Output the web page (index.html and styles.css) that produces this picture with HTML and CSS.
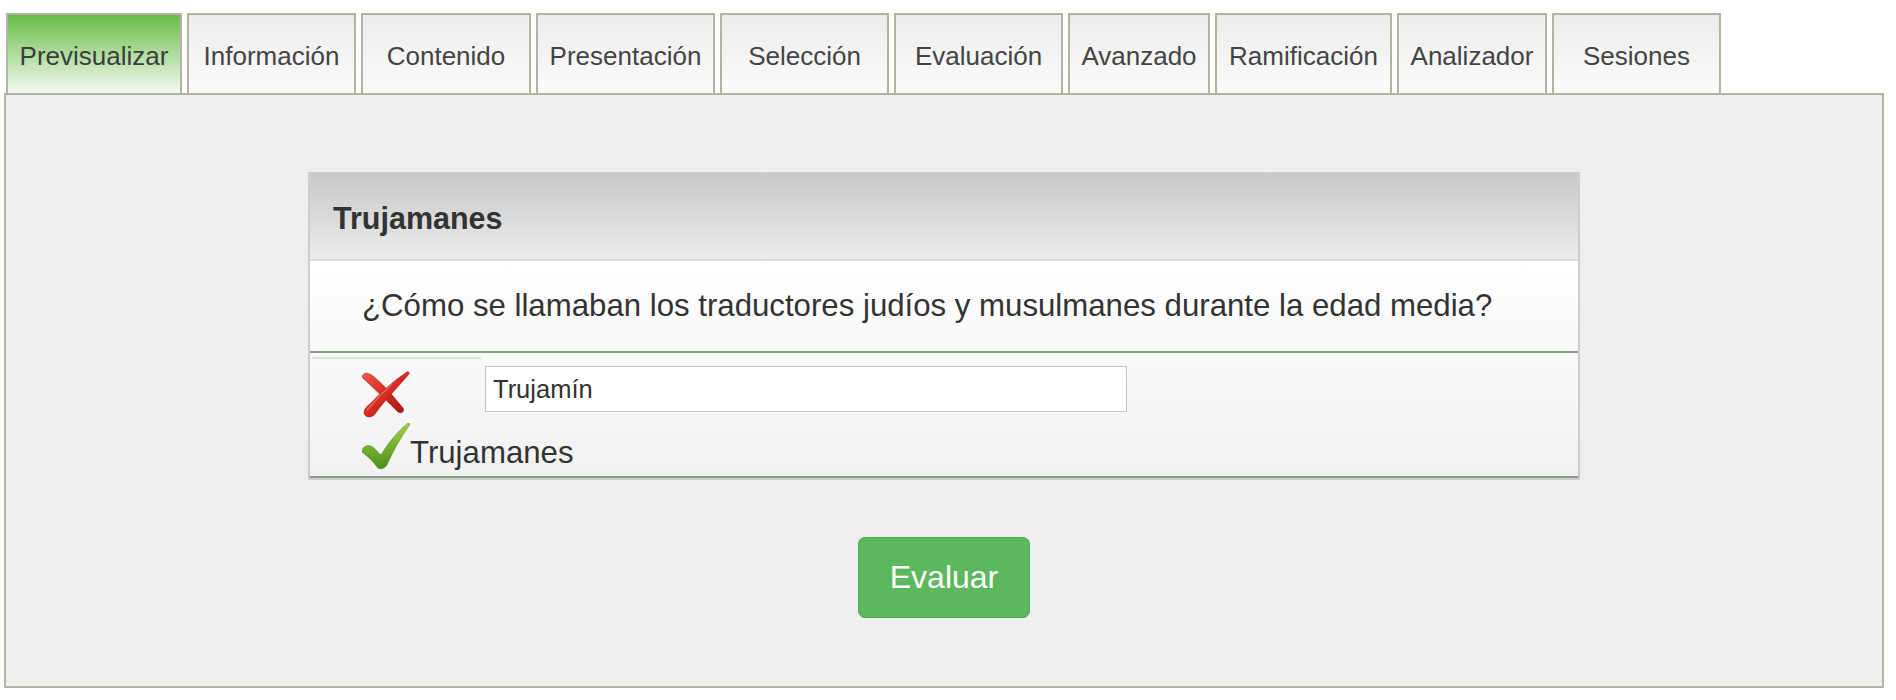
FILE: index.html
```html
<!DOCTYPE html>
<html lang="es">
<head>
<meta charset="utf-8">
<title>Previsualizar</title>
<link rel="stylesheet" href="styles.css">
</head>
<body>
<div class="page">
  <nav class="tabs">
    <div class="tab tab-active tab-prev">Previsualizar</div>
    <div class="tab tab-info">Información</div>
    <div class="tab tab-cont">Contenido</div>
    <div class="tab tab-pres">Presentación</div>
    <div class="tab tab-sel">Selección</div>
    <div class="tab tab-eval">Evaluación</div>
    <div class="tab tab-avz">Avanzado</div>
    <div class="tab tab-ram">Ramificación</div>
    <div class="tab tab-ana">Analizador</div>
    <div class="tab tab-ses">Sesiones</div>
  </nav>
  <section class="panel">
    <div class="card">
      <div class="card-header">Trujamanes</div>
      <div class="question">¿Cómo se llamaban los traductores judíos y musulmanes durante la edad media?</div>
      <div class="answers">
        <div class="answers-sep"></div>
        <div class="answer-row answer-given">
          <svg class="icon icon-wrong" width="48" height="47" viewBox="0 0 48 47">
            <defs>
              <linearGradient id="redg" x1="0" y1="0" x2="1" y2="1">
                <stop offset="0" stop-color="#ee5a50"/>
                <stop offset="0.5" stop-color="#d62b21"/>
                <stop offset="1" stop-color="#a8170f"/>
              </linearGradient>
            </defs>
            <path d="M1,4 C3,1 7,2 11,5 C21,13 31,25 41,37 C43,41 39,43 36,41 C27,32 14,19 3,9 C0,7 0,5 1,4 Z" fill="url(#redg)" stroke="#a51a12" stroke-width="0.6"/>
            <path d="M45,1 C46,0 48,2 47,3 C38,14 22,30 13,43 C10,47 3,47 2,42 C2,38 5,35 9,32 C20,20 33,9 45,1 Z" fill="url(#redg)" stroke="#a51a12" stroke-width="0.6"/>
            <path d="M5,39 C10,33 20,22 30,13" fill="none" stroke="#f7a29a" stroke-width="1.2" opacity="0.5"/>
          </svg>
          <input class="answer-input" type="text" value="Trujamín">
        </div>
        <div class="answer-row answer-correct">
          <svg class="icon icon-right" width="48" height="46" viewBox="0 0 48 46">
            <defs>
              <linearGradient id="greeng" x1="0" y1="0" x2="0" y2="1">
                <stop offset="0" stop-color="#a2cf4a"/>
                <stop offset="0.55" stop-color="#72b02c"/>
                <stop offset="1" stop-color="#4a8d1b"/>
              </linearGradient>
            </defs>
            <path d="M0,27 C2,22 8,21 12,25 L19,32 C26,20 36,8 46,0 C47,-0.5 48.5,1 47.5,2 C39,14 31,28 25,42 C23,46 17,47 15,44 C11,38 5,33 0,29 Z" fill="url(#greeng)" stroke="#4a8a1a" stroke-width="0.5"/>
          </svg>
          <span class="answer-text">Trujamanes</span>
        </div>
      </div>
    </div>
    <div class="actions">
      <button class="btn-evaluar" type="button">Evaluar</button>
    </div>
  </section>
</div>
</body>
</html>
```

FILE: styles.css
```css
html, body {
  margin: 0;
  padding: 0;
  background: #ffffff;
}

body {
  font-family: "Liberation Sans", Arial, Helvetica, sans-serif;
  color: #333333;
}

.page {
  width: 1896px;
}

.tabs {
  display: flex;
  gap: 5px;
  margin-top: 13px;
  padding-left: 6px;
}

.tab {
  box-sizing: border-box;
  height: 80px;
  padding-top: 26px;
  border: 2px solid #b4b3a2;
  border-bottom: none;
  background: linear-gradient(#ececec, #fbfbfb);
  font-size: 26px;
  line-height: 30px;
  color: #444444;
  text-align: center;
  white-space: nowrap;
}

.tab-active {
  background: linear-gradient(#67bc47, #a9d996 45%, #f3faf1);
  color: #3d3d3d;
}

.tab-prev { width: 176px; }
.tab-info { width: 169px; }
.tab-cont { width: 170px; }
.tab-pres { width: 179px; }
.tab-sel  { width: 169px; }
.tab-eval { width: 169px; }
.tab-avz  { width: 142px; }
.tab-ram  { width: 177px; }
.tab-ana  { width: 150px; }
.tab-ses  { width: 169px; }

.panel {
  box-sizing: border-box;
  width: 1880px;
  margin-left: 4px;
  border: 2px solid #b4b3a2;
  background: #eeeeee;
  padding: 77px 0 68px;
}

.card {
  box-sizing: border-box;
  width: 1272px;
  margin: 0 auto;
  border: 2px solid #cdcdcd;
  background: #f4f4f4;
}

.card-header {
  padding: 27px 0 23px 23px;
  background: linear-gradient(#c8c8c8, #ececec);
  border-bottom: 2px solid #dcdcdc;
  font-size: 30.5px;
  line-height: 35px;
  font-weight: bold;
  color: #333333;
}

.question {
  padding: 27px 0 27px 52px;
  background: linear-gradient(#ffffff, #f8f8f8);
  border-bottom: 2px solid #82a182;
  font-size: 31.2px;
  line-height: 36px;
  color: #333333;
  white-space: nowrap;
}

.answers {
  padding: 4px 0 5px;
  background: linear-gradient(#f9f9f9, #f1f1f1);
  border-bottom: 2px solid #82a182;
}

.answers-sep {
  width: 169px;
  margin-left: 2px;
  border-top: 2px solid #dedede;
}

.answer-row {
  display: flex;
  padding-left: 52px;
}

.answer-given {
  align-items: flex-start;
}

.answer-given .icon {
  margin-top: 12px;
  flex: none;
}

.answer-input {
  box-sizing: border-box;
  width: 642px;
  height: 46px;
  margin: 7px 0 0 75px;
  padding: 0 7px;
  border: 1px solid #c2c2c2;
  border-radius: 0;
  background: #ffffff;
  font-family: "Liberation Sans", Arial, Helvetica, sans-serif;
  font-size: 25.5px;
  line-height: 30px;
  color: #333333;
  outline: none;
}

.answer-correct {
  align-items: flex-end;
  margin-top: 5px;
}

.answer-correct .icon {
  margin-bottom: 2px;
  flex: none;
}

.answer-text {
  font-size: 31.2px;
  line-height: 36px;
  color: #333333;
}

.actions {
  display: flex;
  justify-content: center;
  margin-top: 57px;
}

.btn-evaluar {
  padding: 21px 31px;
  border: 1px solid #4cae4c;
  border-radius: 7px;
  background: #5cb85c;
  color: #ffffff;
  font-family: "Liberation Sans", Arial, Helvetica, sans-serif;
  font-size: 32px;
  line-height: 37px;
  cursor: pointer;
}
```
